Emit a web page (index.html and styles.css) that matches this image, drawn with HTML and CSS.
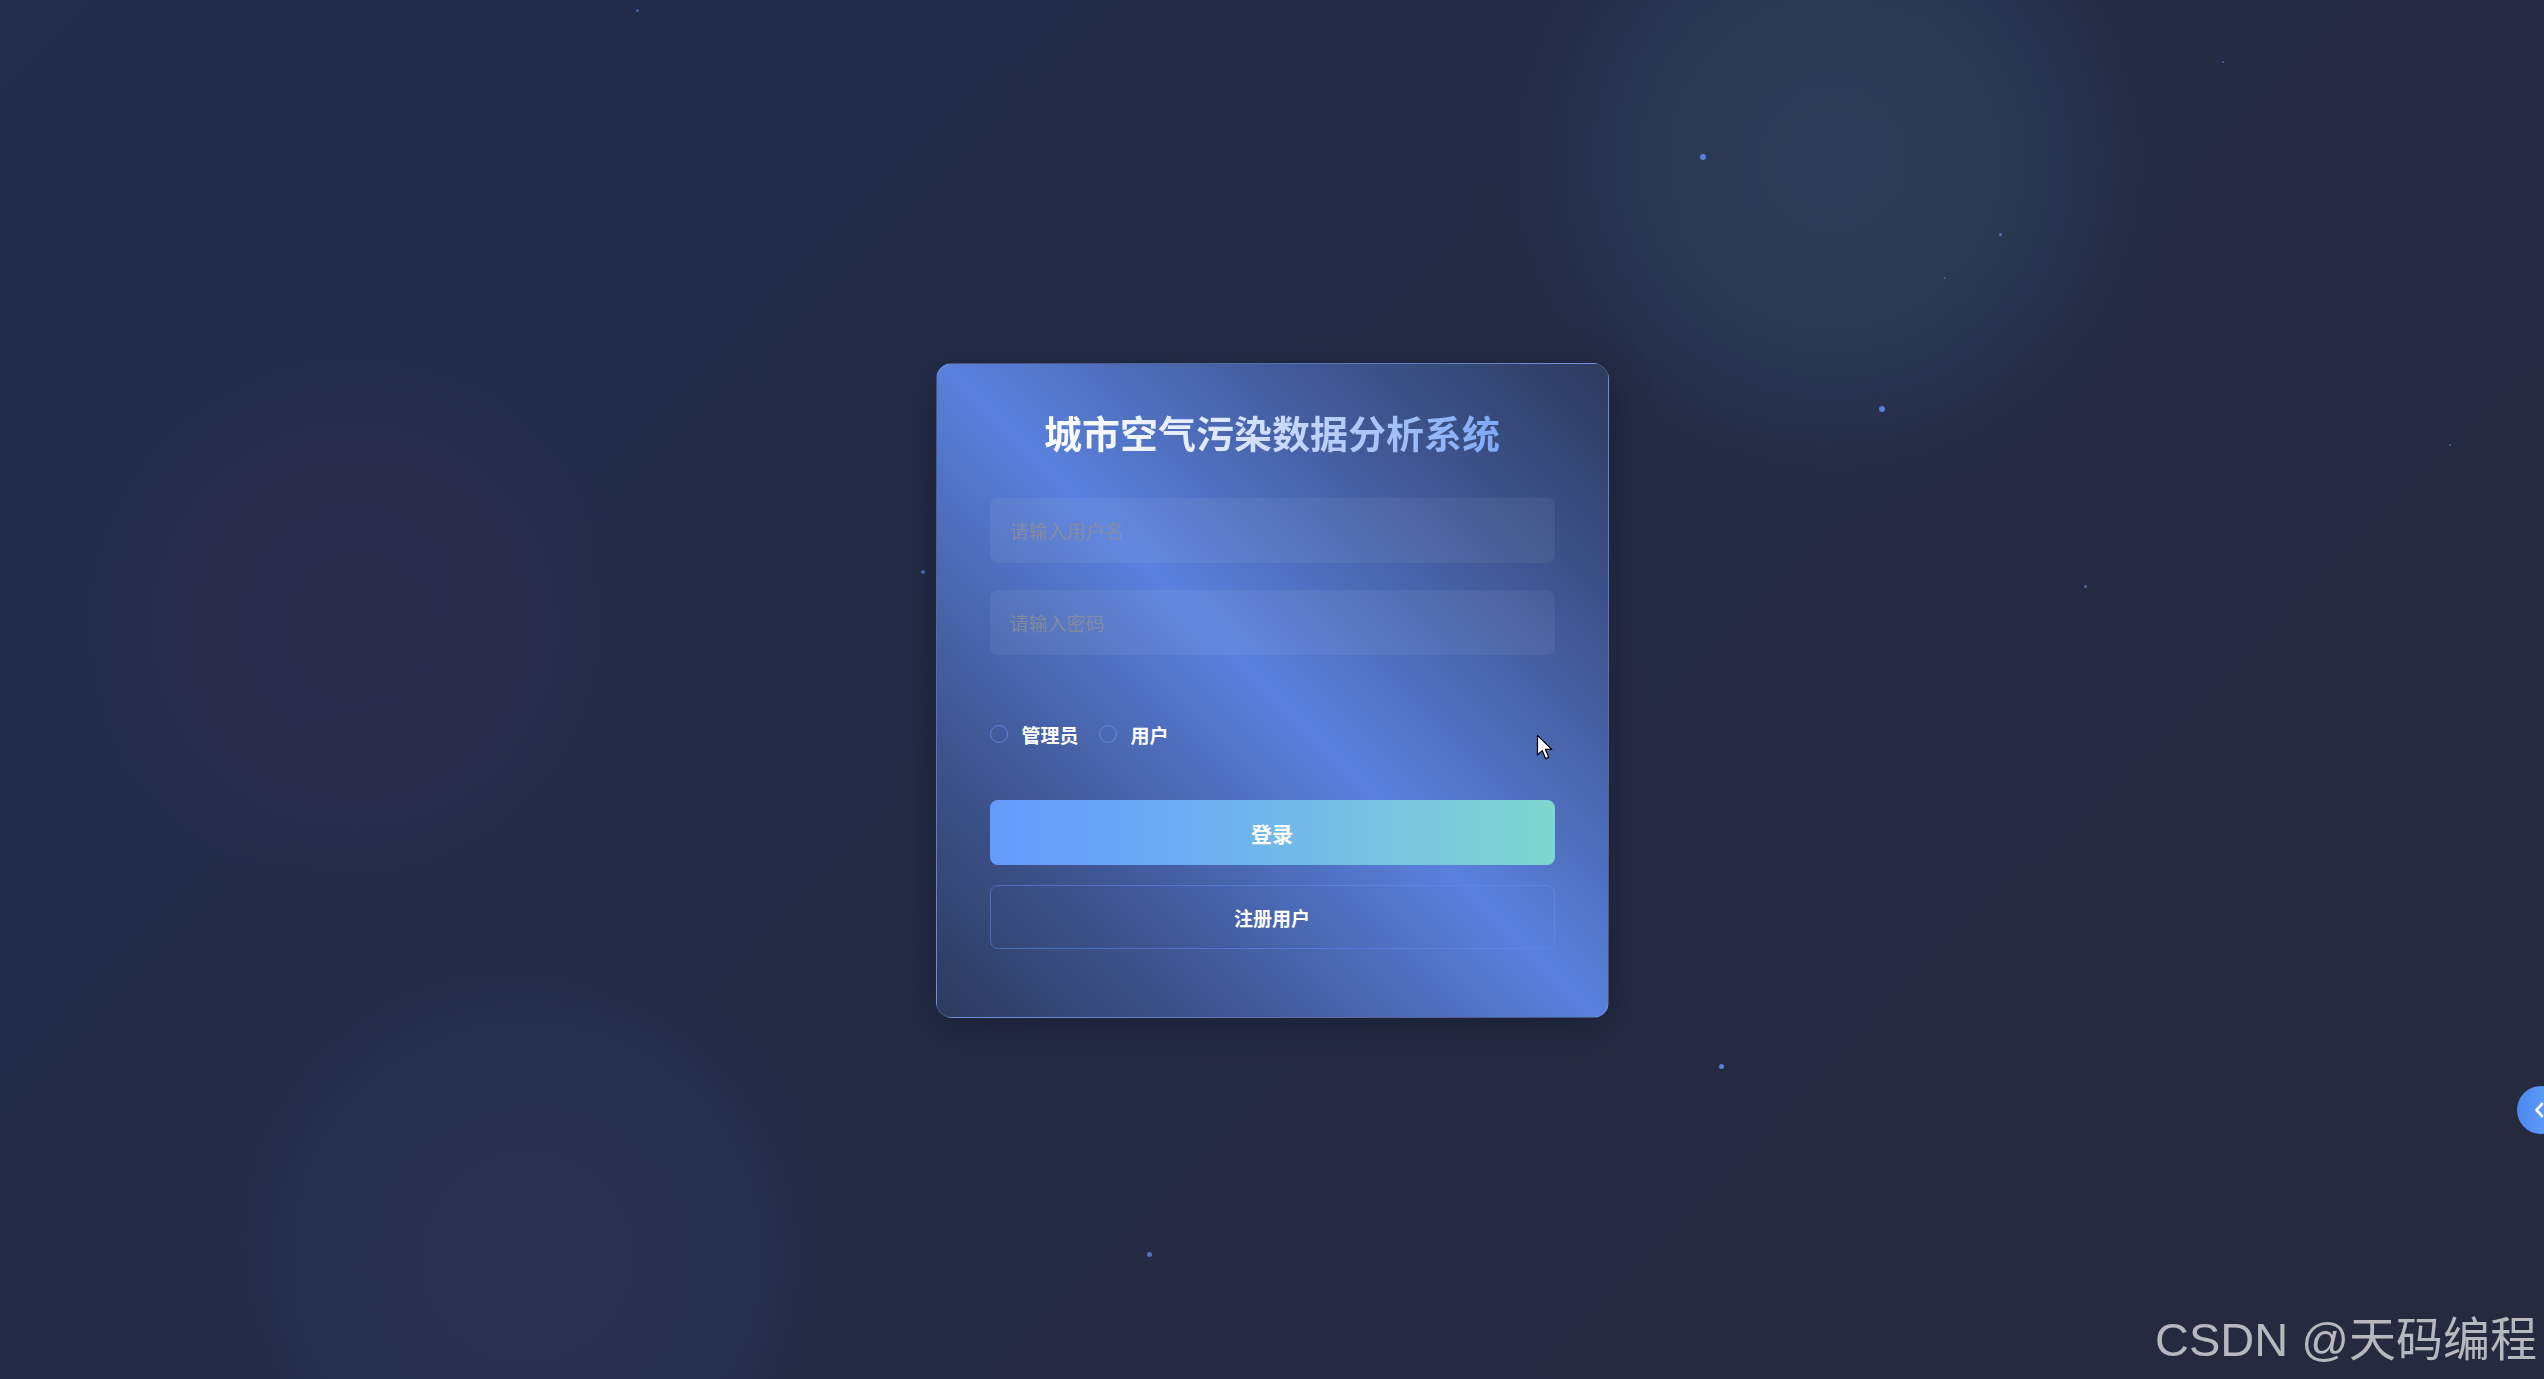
FILE: index.html
```html
<!DOCTYPE html>
<html lang="zh-CN">
<head>
<meta charset="utf-8">
<title>城市空气污染数据分析系统</title>
<link rel="stylesheet" href="styles.css">
</head>
<body>
<div class="bg" aria-hidden="true">
  <div class="blob blob-tr"></div>
  <div class="blob blob-l"></div>
  <div class="blob blob-b"></div>
  <span class="dot d1"></span>
  <span class="dot d2"></span>
  <span class="dot d3"></span>
  <span class="dot d4"></span>
  <span class="dot d5"></span>
  <span class="dot d6"></span>
  <span class="dot d7"></span>
  <span class="dot d8"></span>
  <span class="dot d9"></span>
  <span class="dot d10"></span>
  <span class="dot d11"></span>
</div>

<main class="page">
  <form class="card">
    <h1 class="title">城市空气污染数据分析系统</h1>
    <input class="field" type="text" placeholder="请输入用户名">
    <input class="field field-second" type="password" placeholder="请输入密码">
    <div class="roles">
      <label class="radio"><span class="radio-dot"></span>管理员</label>
      <label class="radio"><span class="radio-dot"></span>用户</label>
    </div>
    <button class="btn btn-login" type="button">登录</button>
    <button class="btn btn-register" type="button">注册用户</button>
  </form>
</main>

<svg class="cursor" width="19" height="27" viewBox="0 0 19 27" aria-hidden="true">
  <path d="M1.5 1.5 L1.5 21 L6.2 16.6 L9.6 24.6 L12.8 23.2 L9.4 15.4 L15.8 15.4 Z" fill="#ffffff" stroke="#000000" stroke-width="1.2" stroke-linejoin="round"/>
</svg>

<div class="side-tab">
  <svg width="10" height="16" viewBox="0 0 10 16" aria-hidden="true">
    <polyline points="8,2 2.5,8 8,14" fill="none" stroke="#ffffff" stroke-width="2.6" stroke-linecap="round" stroke-linejoin="round"/>
  </svg>
</div>

<div class="watermark">CSDN @天码编程</div>
</body>
</html>
```

FILE: styles.css
```css
html, body {
  margin: 0;
  height: 100%;
}

body {
  font-family: "Noto Sans CJK SC", "Noto Sans", "Liberation Sans", sans-serif;
  background: linear-gradient(135deg, #222c4b 0%, #232b45 45%, #262a3e 100%);
  overflow: hidden;
  position: relative;
}

.bg {
  position: absolute;
  inset: 0;
  overflow: hidden;
  pointer-events: none;
}

.blob {
  position: absolute;
  border-radius: 50%;
}

.blob-tr {
  left: 1473px;
  top: -200px;
  width: 720px;
  height: 720px;
  background: radial-gradient(circle, rgba(46, 62, 88, 0.9) 0%, rgba(44, 60, 86, 0.8) 32%, rgba(42, 56, 84, 0.7) 46%, rgba(40, 50, 78, 0.35) 56%, rgba(38, 46, 72, 0.12) 64%, rgba(38, 46, 72, 0) 72%);
}

.blob-l {
  left: 54px;
  top: 325px;
  width: 600px;
  height: 600px;
  background: radial-gradient(circle, rgba(44, 44, 74, 0.85) 0%, rgba(42, 46, 76, 0.75) 40%, rgba(40, 46, 76, 0.55) 50%, rgba(38, 46, 76, 0.2) 58%, rgba(38, 46, 76, 0) 68%);
}

.blob-b {
  left: 197px;
  top: 927px;
  width: 660px;
  height: 660px;
  background: radial-gradient(circle, rgba(44, 50, 84, 0.9) 0%, rgba(42, 50, 84, 0.8) 40%, rgba(40, 50, 84, 0.55) 50%, rgba(38, 48, 82, 0.2) 58%, rgba(38, 48, 82, 0) 68%);
}

.dot {
  position: absolute;
  border-radius: 50%;
  background: #5a7fd6;
}

.d1 { left: 636px; top: 9px; width: 3px; height: 3px; opacity: 0.7; }
.d2 { left: 1700px; top: 154px; width: 6px; height: 6px; }
.d3 { left: 1879px; top: 406px; width: 6px; height: 6px; }
.d4 { left: 1999px; top: 233px; width: 3px; height: 3px; opacity: 0.8; }
.d5 { left: 2222px; top: 61px; width: 2px; height: 2px; opacity: 0.7; }
.d6 { left: 2449px; top: 444px; width: 2px; height: 2px; opacity: 0.7; }
.d7 { left: 2084px; top: 585px; width: 3px; height: 3px; opacity: 0.7; }
.d8 { left: 921px; top: 570px; width: 4px; height: 4px; opacity: 0.8; }
.d9 { left: 1719px; top: 1064px; width: 5px; height: 5px; }
.d10 { left: 1147px; top: 1252px; width: 5px; height: 5px; opacity: 0.85; }
.d11 { left: 1944px; top: 277px; width: 2px; height: 2px; opacity: 0.6; }

.page {
  position: relative;
  height: 100vh;
  display: flex;
  align-items: center;
  justify-content: center;
}

.card {
  width: 673px;
  box-sizing: border-box;
  margin-top: 2px;
  padding: 43px 53px 68px;
  border: 1px solid rgba(255, 255, 255, 0.13);
  border-radius: 16px;
  background: linear-gradient(45deg, #2c3a5d 0%, #3e5591 22%, #5a81dd 50%, #3f5692 78%, #2c3a5c 100%);
  box-shadow: 0 10px 40px rgba(10, 14, 30, 0.35);
}

.title {
  margin: 0;
  font-size: 38px;
  line-height: 49px;
  font-weight: 700;
  text-align: center;
  background: linear-gradient(90deg, #ffffff 10%, #dfe8fd 40%, #6c9cf7 100%);
  -webkit-background-clip: text;
  background-clip: text;
  color: transparent;
}

.field {
  display: block;
  width: 100%;
  height: 65px;
  margin-top: 42px;
  box-sizing: border-box;
  padding: 0 20px;
  border: none;
  border-radius: 8px;
  outline: none;
  background: rgba(255, 255, 255, 0.06);
  font-family: inherit;
  font-size: 19px;
  color: #ffffff;
}

.field::placeholder {
  color: rgba(140, 142, 152, 0.85);
}

.field-second {
  margin-top: 27px;
}

.roles {
  display: flex;
  align-items: center;
  height: 30px;
  margin-top: 64px;
}

.radio {
  display: flex;
  align-items: center;
  gap: 14px;
  margin-right: 20px;
  font-size: 19px;
  font-weight: 700;
  color: #ffffff;
}

.radio-dot {
  width: 18px;
  height: 18px;
  box-sizing: border-box;
  border-radius: 50%;
  border: 1px solid rgba(112, 142, 232, 0.75);
}

.btn {
  display: flex;
  align-items: center;
  justify-content: center;
  width: 100%;
  box-sizing: border-box;
  border-radius: 8px;
  font-family: inherit;
  font-weight: 700;
  color: #ffffff;
  cursor: pointer;
}

.btn-login {
  height: 65px;
  margin-top: 51px;
  border: none;
  font-size: 21px;
  background: linear-gradient(90deg, #649bfd 0%, #6cadf2 35%, #78c4df 70%, #7fd7cf 100%);
}

.btn-register {
  height: 64px;
  margin-top: 20px;
  font-size: 19px;
  background: transparent;
  border: 1px solid rgba(100, 138, 240, 0.55);
}

.cursor {
  position: absolute;
  left: 1536px;
  top: 734px;
}

.side-tab {
  position: fixed;
  right: -21px;
  top: 1086px;
  width: 48px;
  height: 48px;
  box-sizing: border-box;
  padding-left: 17px;
  border-radius: 50%;
  background: linear-gradient(90deg, #4c88ef 0%, #68a6fd 100%);
  display: flex;
  align-items: center;
}

.watermark {
  position: fixed;
  right: 7px;
  bottom: 16px;
  font-family: "Liberation Sans", "Noto Sans CJK SC", sans-serif;
  font-size: 47px;
  line-height: 1;
  color: rgba(200, 200, 204, 0.9);
  white-space: nowrap;
}
```
